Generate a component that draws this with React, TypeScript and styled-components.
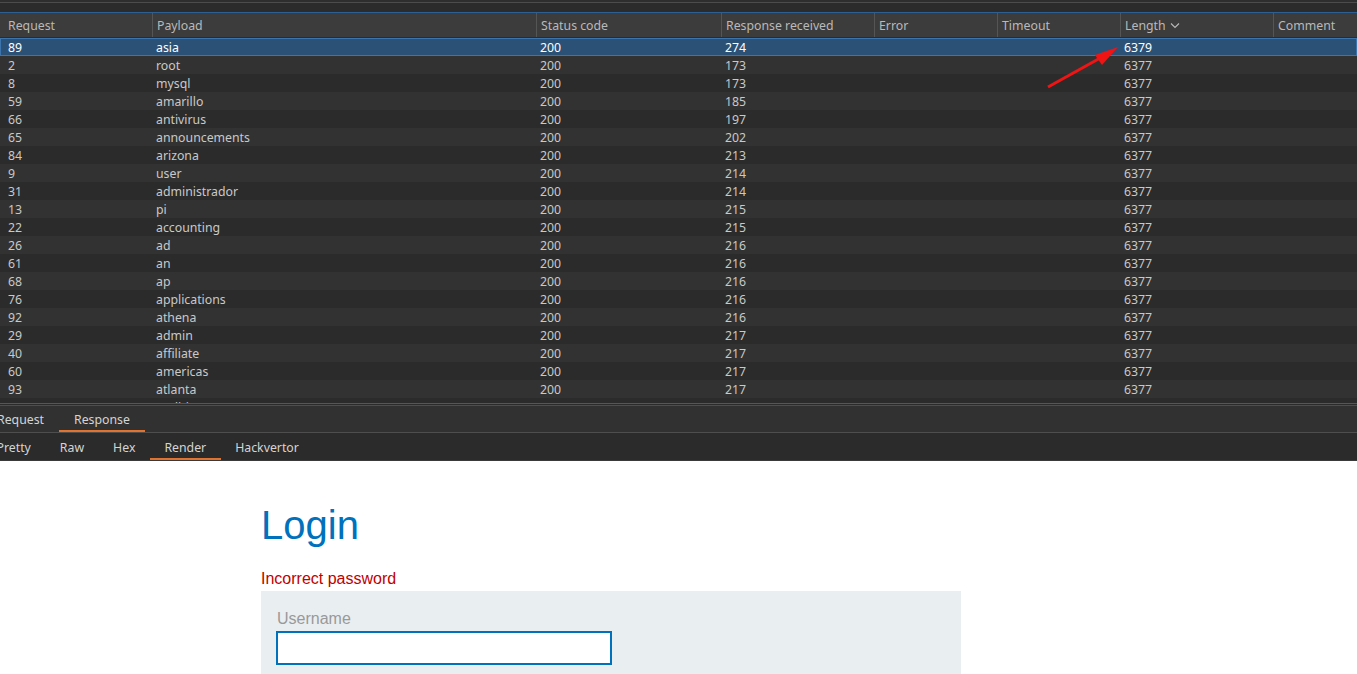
import React from 'react';
import styled, { createGlobalStyle } from 'styled-components';

const GlobalStyle = createGlobalStyle`
  html, body {
    margin: 0;
    padding: 0;
    background: #ffffff;
    overflow: hidden;
  }
  * {
    box-sizing: border-box;
  }
`;

type Result = {
  id: number;
  payload: string;
  status: number;
  received: number;
  length: number;
};

const results: Result[] = [
  { id: 89, payload: 'asia', status: 200, received: 274, length: 6379 },
  { id: 2, payload: 'root', status: 200, received: 173, length: 6377 },
  { id: 8, payload: 'mysql', status: 200, received: 173, length: 6377 },
  { id: 59, payload: 'amarillo', status: 200, received: 185, length: 6377 },
  { id: 66, payload: 'antivirus', status: 200, received: 197, length: 6377 },
  { id: 65, payload: 'announcements', status: 200, received: 202, length: 6377 },
  { id: 84, payload: 'arizona', status: 200, received: 213, length: 6377 },
  { id: 9, payload: 'user', status: 200, received: 214, length: 6377 },
  { id: 31, payload: 'administrador', status: 200, received: 214, length: 6377 },
  { id: 13, payload: 'pi', status: 200, received: 215, length: 6377 },
  { id: 22, payload: 'accounting', status: 200, received: 215, length: 6377 },
  { id: 26, payload: 'ad', status: 200, received: 216, length: 6377 },
  { id: 61, payload: 'an', status: 200, received: 216, length: 6377 },
  { id: 68, payload: 'ap', status: 200, received: 216, length: 6377 },
  { id: 76, payload: 'applications', status: 200, received: 216, length: 6377 },
  { id: 92, payload: 'athena', status: 200, received: 216, length: 6377 },
  { id: 29, payload: 'admin', status: 200, received: 217, length: 6377 },
  { id: 40, payload: 'affiliate', status: 200, received: 217, length: 6377 },
  { id: 60, payload: 'americas', status: 200, received: 217, length: 6377 },
  { id: 93, payload: 'atlanta', status: 200, received: 217, length: 6377 },
  { id: 94, payload: 'auditing', status: 200, received: 218, length: 6377 },
];

const columns = ['Request', 'Payload', 'Status code', 'Response received', 'Error', 'Timeout', 'Length', 'Comment'];
const gridCols = '152px 384px 185px 153px 123px 123px 153px 84px';

const Page = styled.div`
  width: 1357px;
  height: 674px;
  display: flex;
  flex-direction: column;
  overflow: hidden;
  font-family: 'Noto Sans', 'Open Sans', sans-serif;
`;

const Burp = styled.div`
  background: #2b2b2b;
  display: flex;
  flex-direction: column;
  position: relative;
`;

const TopStrip = styled.div`
  height: 12px;
  border-top: 2px solid #2e2e2e;
  box-shadow: inset 0 1px 0 #4c4c4c;
  background: #2b2b2b;
`;

const Table = styled.div`
  border-top: 1px solid #2c5f93;
  border-bottom: 1px solid #2c5f93;
`;

const HeaderRow = styled.div`
  display: grid;
  grid-template-columns: ${gridCols};
  height: 25px;
  background: #3c3c3c;
  border-bottom: 1px solid #2b2b2b;
`;

const HeaderCell = styled.div<{ $first?: boolean }>`
  display: flex;
  align-items: center;
  gap: 4px;
  padding-left: ${(p) => (p.$first ? '8px' : '4px')};
  border-left: ${(p) => (p.$first ? 'none' : '1px solid #555555')};
  color: #b9b9b9;
  font-size: 12.3px;
  white-space: nowrap;
`;

const Body = styled.div`
  height: 365px;
  overflow: hidden;
`;

const Row = styled.div<{ $selected?: boolean; $odd?: boolean }>`
  display: grid;
  grid-template-columns: ${gridCols};
  height: 18px;
  font-size: 12.3px;
  color: ${(p) => (p.$selected ? '#ffffff' : '#c9c9c9')};
  background: ${(p) => (p.$selected ? '#2c5177' : p.$odd ? '#2b2b2b' : '#323232')};
  box-shadow: ${(p) => (p.$selected ? 'inset 0 0 0 1px #3c74ad' : 'none')};
`;

const Cell = styled.div<{ $first?: boolean }>`
  padding: 1px 0 0 ${(p) => (p.$first ? '8px' : '4px')};
  white-space: nowrap;
  overflow: hidden;
  line-height: 17px;
`;

const Divider = styled.div`
  height: 2px;
  background: #2b2b2b;
  border-bottom: 1px solid #4e4e4e;
`;

const TabBar = styled.div<{ $dark?: boolean }>`
  display: flex;
  height: ${(p) => (p.$dark ? '28px' : '27px')};
  padding-top: ${(p) => (p.$dark ? '4px' : '3px')};
  background: ${(p) => (p.$dark ? '#2b2b2b' : '#313131')};
  border-bottom: 1px solid ${(p) => (p.$dark ? '#3a3a3a' : '#4e4e4e')};
  overflow: hidden;
`;

const Tab = styled.div<{ $active?: boolean; $lead?: boolean }>`
  display: flex;
  align-items: center;
  padding: 0 15px;
  margin-left: ${(p) => (p.$lead ? '-18px' : '0')};
  margin-right: 0;
  font-size: 12.3px;
  color: #d4d4d4;
  border-bottom: 2px solid ${(p) => (p.$active ? '#e2722f' : 'transparent')};
  white-space: nowrap;
`;

const SubTab = styled(Tab)`
  padding: 0 14.5px;
`;

const Arrow = styled.svg`
  position: absolute;
  left: 1040px;
  top: 40px;
  pointer-events: none;
`;

const Render = styled.div`
  flex: 1;
  background: #ffffff;
  padding: 41px 0 0 261px;
  font-family: 'Liberation Sans', Arial, sans-serif;
`;

const Title = styled.h1`
  margin: 0;
  font-weight: normal;
  font-size: 40px;
  line-height: 46px;
  color: #0071bc;
`;

const ErrorText = styled.p`
  margin: 22px 0 0;
  font-size: 16px;
  line-height: 18px;
  color: #c00000;
`;

const Form = styled.div`
  width: 700px;
  margin-top: 3px;
  padding: 19px 15px 0;
  min-height: 100px;
  background: #e9eef1;
  display: flex;
  flex-direction: column;
`;

const Label = styled.label`
  padding-left: 1px;
  font-size: 16px;
  line-height: 18px;
  color: #999999;
`;

const Input = styled.input`
  margin-top: 3px;
  width: 336px;
  height: 34px;
  border: 2px solid #0071bc;
  background: #ffffff;
  outline: none;
`;

export default function App() {
  return (
    <>
      <GlobalStyle />
      <Page>
        <Burp>
          <TopStrip />
          <Table>
            <HeaderRow>
              {columns.map((c, i) => (
                <HeaderCell key={c} $first={i === 0}>
                  {c}
                  {c === 'Length' && (
                    <svg width="10" height="7" viewBox="0 0 10 7">
                      <path d="M1 1.5 L5 5.5 L9 1.5" stroke="#b9b9b9" strokeWidth="1.1" fill="none" />
                    </svg>
                  )}
                </HeaderCell>
              ))}
            </HeaderRow>
            <Body>
              {results.map((r, i) => (
                <Row key={r.id} $selected={i === 0} $odd={i % 2 === 0}>
                  <Cell $first>{r.id}</Cell>
                  <Cell>{r.payload}</Cell>
                  <Cell>{r.status}</Cell>
                  <Cell>{r.received}</Cell>
                  <Cell />
                  <Cell />
                  <Cell>{r.length}</Cell>
                  <Cell />
                </Row>
              ))}
            </Body>
          </Table>
          <Divider />
          <TabBar>
            <Tab $lead>Request</Tab>
            <Tab $active>Response</Tab>
          </TabBar>
          <TabBar $dark>
            <SubTab $lead>Pretty</SubTab>
            <SubTab>Raw</SubTab>
            <SubTab>Hex</SubTab>
            <SubTab $active>Render</SubTab>
            <SubTab>Hackvertor</SubTab>
          </TabBar>
          <Arrow width="90" height="55" viewBox="0 0 90 55">
            <line x1="8" y1="47" x2="62" y2="17" stroke="#f01414" strokeWidth="3" />
            <polygon points="78,7 55,15 62,25" fill="#f01414" />
          </Arrow>
        </Burp>
        <Render>
          <Title>Login</Title>
          <ErrorText>Incorrect password</ErrorText>
          <Form>
            <Label>Username</Label>
            <Input />
          </Form>
        </Render>
      </Page>
    </>
  );
}
